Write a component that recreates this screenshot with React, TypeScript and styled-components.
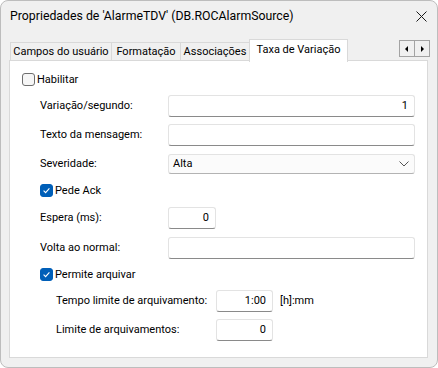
import styled, { createGlobalStyle } from "styled-components";

const GlobalStyle = createGlobalStyle`
  html, body {
    margin: 0;
    padding: 0;
    background: #ffffff;
  }
  body {
    font-family: Roboto, "Noto Sans", "Liberation Sans", sans-serif;
    font-size: 11px;
    line-height: 16px;
    color: #000000;
  }
`;

const Window = styled.div`
  box-sizing: border-box;
  width: 438px;
  height: 368px;
  display: flex;
  flex-direction: column;
  background: #f0f0f0;
  border: 1px solid #bdbdbd;
  border-radius: 8px;
  overflow: hidden;
`;

const TitleBar = styled.div`
  display: flex;
  align-items: center;
  justify-content: space-between;
  height: 30px;
  padding: 0 10px 0 9px;
  font-size: 12.3px;
`;

const CloseButton = styled.div`
  display: flex;
  align-items: center;
  justify-content: center;
  width: 12px;
  height: 12px;
`;

const Body = styled.div`
  flex: 1;
  display: flex;
  flex-direction: column;
  padding: 8px 9px 9px 8px;
`;

const TabStrip = styled.div`
  display: flex;
  align-items: flex-end;
  height: 22px;
  position: relative;
  z-index: 1;
  margin-bottom: -1px;
`;

const Tab = styled.div<{ $active?: boolean; $width: number }>`
  box-sizing: border-box;
  display: flex;
  align-items: center;
  justify-content: center;
  width: ${(p) => p.$width}px;
  height: ${(p) => (p.$active ? "23px" : "19px")};
  padding-bottom: ${(p) => (p.$active ? "3px" : "0")};
  margin-bottom: ${(p) => (p.$active ? "-1px" : "0")};
  background: ${(p) => (p.$active ? "#ffffff" : "#f0f0f0")};
  border: 1px solid #d9d9d9;
  border-bottom: ${(p) => (p.$active ? "none" : "1px solid #d9d9d9")};
  margin-left: -1px;
  white-space: nowrap;
  &:first-child {
    margin-left: 1px;
  }
`;

const TabScroller = styled.div`
  display: flex;
  margin-left: auto;
  margin-right: -2px;
  align-self: flex-start;
  margin-top: 1px;
`;

const ScrollButton = styled.div`
  box-sizing: border-box;
  width: 16px;
  height: 17px;
  display: flex;
  align-items: center;
  justify-content: center;
  background: #f0f0f0;
  border: 1px solid #a3a3a3;
  & + & {
    border-left: none;
    width: 15px;
  }
`;

const Panel = styled.div`
  flex: 1;
  display: flex;
  flex-direction: column;
  background: #ffffff;
  border: 1px solid #d9d9d9;
  padding: 12px 12px 0 12px;
`;

const Row = styled.div<{ $gap: number; $indent?: number }>`
  display: flex;
  align-items: center;
  margin-top: ${(p) => p.$gap}px;
  padding-left: ${(p) => p.$indent ?? 0}px;
`;

const Label = styled.div<{ $width: number }>`
  width: ${(p) => p.$width}px;
  flex-shrink: 0;
  white-space: nowrap;
`;

const Field = styled.div<{ $width?: number; $align?: string }>`
  box-sizing: border-box;
  height: 22px;
  width: ${(p) => (p.$width ? `${p.$width}px` : "auto")};
  flex: ${(p) => (p.$width ? "none" : "1")};
  display: flex;
  align-items: center;
  justify-content: ${(p) => (p.$align === "right" ? "flex-end" : "flex-start")};
  padding: 0 6px;
  background: #ffffff;
  border: 1px solid #e3e3e3;
  border-bottom: 1px solid #8a8a8a;
  border-radius: 3px;
  color: #000000;
`;

const Combo = styled.div`
  box-sizing: border-box;
  flex: 1;
  height: 20px;
  display: flex;
  align-items: center;
  justify-content: space-between;
  padding: 0 5px 0 4px;
  background: #fbfbfb;
  border: 1px solid #e3e3e3;
  border-bottom: 1px solid #b3b3b3;
  border-radius: 3px;
`;

const Check = styled.div`
  display: flex;
  align-items: center;
  gap: 2px;
  height: 13px;
`;

const Box = styled.div<{ $checked?: boolean }>`
  box-sizing: border-box;
  width: 13px;
  height: 13px;
  border-radius: 3px;
  display: flex;
  align-items: center;
  justify-content: center;
  background: ${(p) => (p.$checked ? "#005fb8" : "#f6f6f6")};
  border: 1px solid ${(p) => (p.$checked ? "#005fb8" : "#6e6e6e")};
`;

const Unit = styled.div`
  margin-left: 7px;
`;

const CheckBox = ({ checked, label }: { checked?: boolean; label: string }) => (
  <Check>
    <Box $checked={checked}>
      {checked && (
        <svg width="9" height="9" viewBox="0 0 9 9">
          <path d="M1.6 4.7 L3.6 6.6 L7.4 2.4" fill="none" stroke="#ffffff" strokeWidth="1.1" />
        </svg>
      )}
    </Box>
    <span>{label}</span>
  </Check>
);

const Triangle = ({ dir }: { dir: "left" | "right" }) => (
  <svg width="6" height="8" viewBox="0 0 6 8">
    <path d={dir === "left" ? "M4 1 L4 7 L1 4 Z" : "M2 1 L2 7 L5 4 Z"} fill="#000000" />
  </svg>
);

const App = () => {
  return (
    <>
      <GlobalStyle />
      <Window>
        <TitleBar>
          <span>Propriedades de 'AlarmeTDV' (DB.ROCAlarmSource)</span>
          <CloseButton>
            <svg width="11" height="11" viewBox="0 0 11 11">
              <path d="M0.5 0.5 L10.5 10.5 M10.5 0.5 L0.5 10.5" stroke="#1a1a1a" strokeWidth="1" />
            </svg>
          </CloseButton>
        </TitleBar>
        <Body>
          <TabStrip>
            <Tab $width={102}>Campos do usuário</Tab>
            <Tab $width={70}>Formatação</Tab>
            <Tab $width={70}>Associações</Tab>
            <Tab $active $width={99}>Taxa de Variação</Tab>
            <TabScroller>
              <ScrollButton>
                <Triangle dir="left" />
              </ScrollButton>
              <ScrollButton>
                <Triangle dir="right" />
              </ScrollButton>
            </TabScroller>
          </TabStrip>
          <Panel>
            <Row $gap={0}>
              <CheckBox label="Habilitar" />
            </Row>
            <Row $gap={9} $indent={18}>
              <Label $width={128}>Variação/segundo:</Label>
              <Field $align="right">1</Field>
            </Row>
            <Row $gap={7} $indent={18}>
              <Label $width={128}>Texto da mensagem:</Label>
              <Field />
            </Row>
            <Row $gap={8} $indent={18}>
              <Label $width={128}>Severidade:</Label>
              <Combo>
                <span>Alta</span>
                <svg width="10" height="6" viewBox="0 0 10 6">
                  <path d="M0.5 0.5 L5 5 L9.5 0.5" fill="none" stroke="#555555" strokeWidth="1" />
                </svg>
              </Combo>
            </Row>
            <Row $gap={10} $indent={18}>
              <CheckBox checked label="Pede Ack" />
            </Row>
            <Row $gap={10} $indent={18}>
              <Label $width={128}>Espera (ms):</Label>
              <Field $width={48} $align="right">0</Field>
            </Row>
            <Row $gap={8} $indent={18}>
              <Label $width={128}>Volta ao normal:</Label>
              <Field />
            </Row>
            <Row $gap={9} $indent={18}>
              <CheckBox checked label="Permite arquivar" />
            </Row>
            <Row $gap={9} $indent={34}>
              <Label $width={160}>Tempo limite de arquivamento:</Label>
              <Field $width={57} $align="right">1:00</Field>
              <Unit>[h]:mm</Unit>
            </Row>
            <Row $gap={7} $indent={34}>
              <Label $width={160}>Limite de arquivamentos:</Label>
              <Field $width={57} $align="right">0</Field>
            </Row>
          </Panel>
        </Body>
      </Window>
    </>
  );
};

export default App;
